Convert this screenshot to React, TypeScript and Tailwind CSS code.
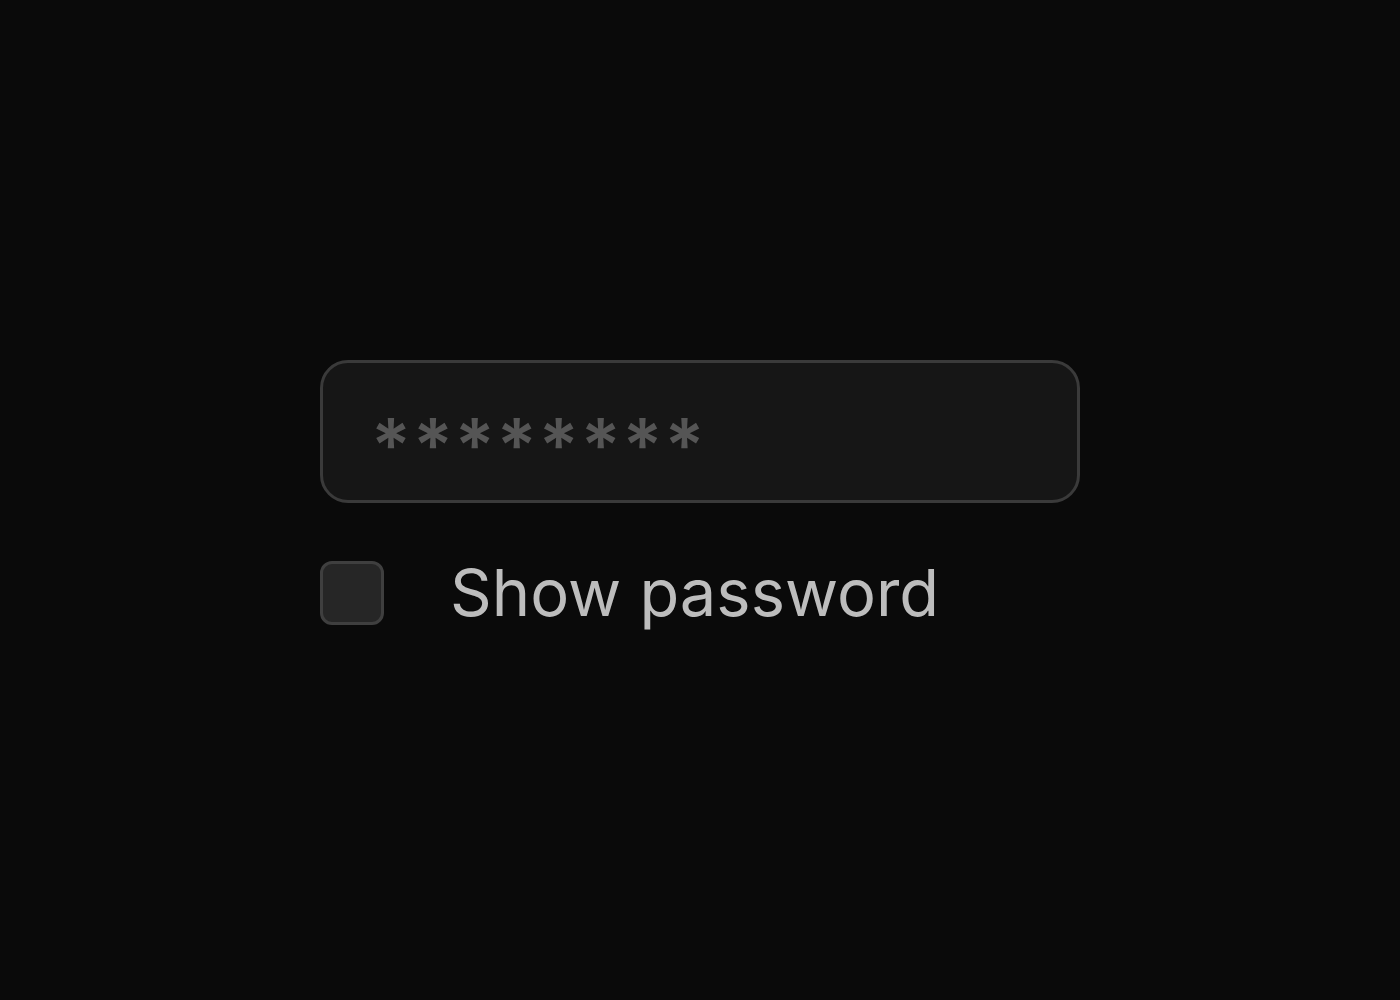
export default function App() {
  return (
    <div className="w-[1400px] h-[1000px] bg-[#0a0a0a] flex flex-col items-start pl-[320px] pt-[360px]" style={{ fontFamily: "Inter, 'Noto Sans', sans-serif" }}>
      <div className="w-[760px] h-[143px] rounded-[28px] border-[3px] border-[#3a3a3a] bg-[#161616] flex items-center pl-[48px]">
        <span className="text-[74px] leading-none text-[#555555] font-semibold tracking-[2px] pt-[26px]">********</span>
      </div>
      <div className="mt-[57px] flex items-center gap-[66px]">
        <div className="w-[64px] h-[64px] rounded-[12px] border-[3px] border-[#3f3f3f] bg-[#262626]" />
        <span className="text-[65px] leading-none text-[#bdbdbd]">Show password</span>
      </div>
    </div>
  );
}
